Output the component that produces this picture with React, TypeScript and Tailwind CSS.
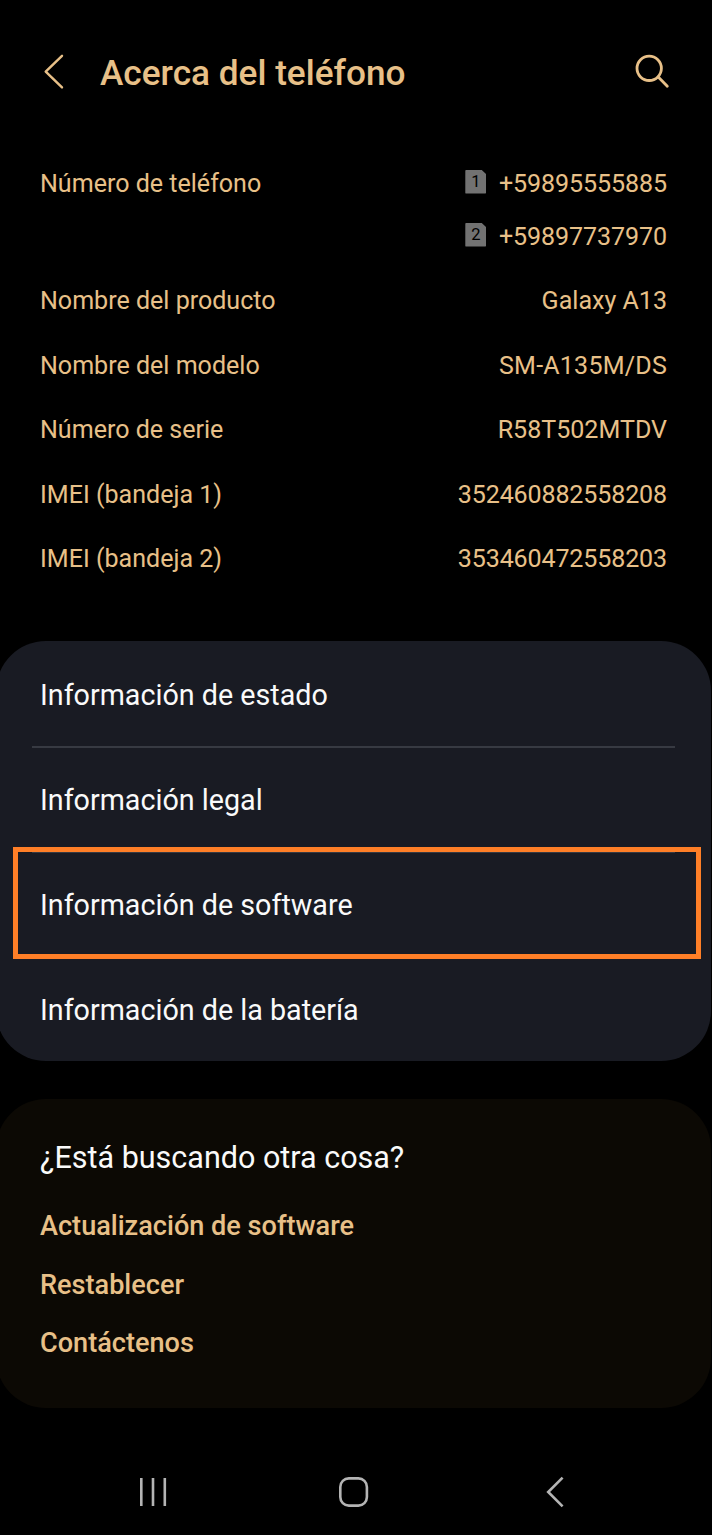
import clsx from "clsx";

type InfoRow = {
  label: string;
  value: string;
};

const phones = ["+59895555885", "+59897737970"];

const deviceInfo: InfoRow[] = [
  { label: "Nombre del producto", value: "Galaxy A13" },
  { label: "Nombre del modelo", value: "SM-A135M/DS" },
  { label: "Número de serie", value: "R58T502MTDV" },
  { label: "IMEI (bandeja 1)", value: "352460882558208" },
  { label: "IMEI (bandeja 2)", value: "353460472558203" },
];

const menu = [
  { label: "Información de estado" },
  { label: "Información legal" },
  { label: "Información de software", highlighted: true },
  { label: "Información de la batería" },
];

const links = ["Actualización de software", "Restablecer", "Contáctenos"];

export default function App() {
  return (
    <main className="flex h-[1535px] w-[712px] flex-col overflow-hidden bg-black font-['Roboto',sans-serif] text-[#e8c088]">
      <header className="flex h-[157px] items-center pb-[13px] pl-[43px] pr-[42px]">
        <button type="button" aria-label="Atrás">
          <svg width="22" height="38" viewBox="0 0 22 38" fill="none" stroke="currentColor" strokeWidth="2.4" strokeLinecap="round" strokeLinejoin="round">
            <path d="M19 2.8 2.7 18.6 19 34.4" />
          </svg>
        </button>
        <h1 className="ml-[35px] pt-[2px] text-[35.2px] font-medium leading-10">Acerca del teléfono</h1>
        <button type="button" aria-label="Buscar" className="ml-auto">
          <svg width="36" height="36" viewBox="0 0 36 36" fill="none" stroke="currentColor" strokeWidth="2.8" strokeLinecap="round">
            <circle cx="15.2" cy="14.3" r="12.2" />
            <path d="m24.5 23.3 8.8 9" />
          </svg>
        </button>
      </header>

      <section className="h-[484px] pl-[40px] pr-[45px] text-[25.05px] leading-[53px]">
        <div className="flex items-start justify-between">
          <span>Número de teléfono</span>
          <div>
            {phones.map((phone, i) => (
              <div key={phone} className="flex items-center justify-end">
                <SimBadge slot={i + 1} />
                <span className="ml-3 tracking-[-0.08px]">{phone}</span>
              </div>
            ))}
          </div>
        </div>
        <div className="mt-[5.5px]">
          {deviceInfo.map((row) => (
            <div key={row.label} className="flex h-[64.5px] items-center justify-between">
              <span>{row.label}</span>
              <span className={clsx(/^\d+$/.test(row.value) && "tracking-[-0.13px]", row.value.includes("/") && "tracking-[0.2px]")}>
                {row.value}
              </span>
            </div>
          ))}
        </div>
      </section>

      <section className="-ml-[4px] h-[420px] w-[715px] rounded-[50px] bg-[#191b23] text-[28.7px] text-[#fafafa]">
        {menu.map((item, i) => (
          <div key={item.label} className="relative h-[105px] pl-[44px]">
            {(i === 1 || i === 2) && <div className="absolute left-[36px] top-0 h-[2px] w-[643px] bg-[#373a42]" />}
            <span className="block leading-[108px]">{item.label}</span>
            {item.highlighted && (
              <div className="absolute left-[17px] top-[-4px] h-[112px] w-[688px] border-[5px] border-[#ff7f27]" />
            )}
          </div>
        ))}
      </section>

      <section className="-ml-[4px] mt-[38px] h-[309px] w-[715px] rounded-[50px] bg-[#0c0904] pl-[44px] pt-[30px]">
        <h2 className="text-[30.5px] leading-[58px] text-[#fafafa]">¿Está buscando otra cosa?</h2>
        <ul className="mt-[10px] text-[27.1px] font-medium">
          {links.map((link) => (
            <li key={link} className="h-[58.5px] leading-[58px]">{link}</li>
          ))}
        </ul>
      </section>

      <nav className="mt-[68px] flex h-[32px] items-center pl-[138px] text-[#b4b4b4]">
        <svg width="30" height="32" viewBox="0 0 30 32" stroke="currentColor" strokeWidth="2.6">
          <path d="M3.3 2v28M15 2v28M26.8 2v28" />
        </svg>
        <svg className="ml-[170px]" width="32" height="32" viewBox="0 0 32 32" fill="none" stroke="currentColor" strokeWidth="2.6">
          <rect x="2.3" y="2.4" width="26.6" height="27.2" rx="8.5" />
        </svg>
        <svg className="ml-[174px]" width="22" height="32" viewBox="0 0 22 32" fill="none" stroke="currentColor" strokeWidth="2.6">
          <path d="M18.6 1.6 4.2 16l14.4 14.4" />
        </svg>
      </nav>
    </main>
  );
}

function SimBadge({ slot }: { slot: number }) {
  return (
    <span
      className={clsx(
        "-mt-[4px] mr-[0.6px] flex h-6 w-[21px] items-center justify-center rounded-[1px] bg-[#727272] pt-[2px] text-[16.5px] leading-none text-black",
        "[clip-path:polygon(0_0,76%_0,100%_20%,100%_100%,0_100%)]"
      )}
    >
      {slot}
    </span>
  );
}
